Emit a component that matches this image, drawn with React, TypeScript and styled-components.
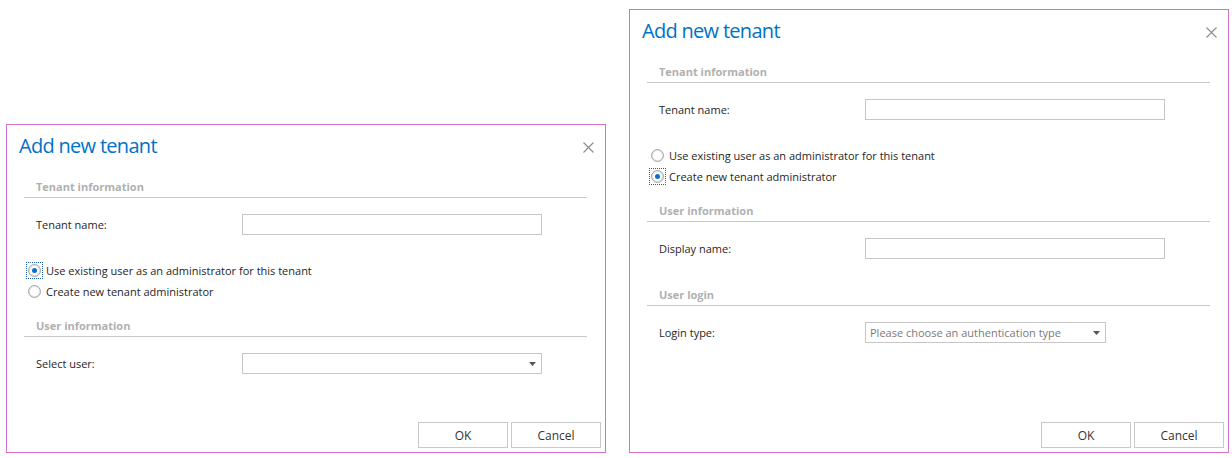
import React from "react";
import styled, { createGlobalStyle } from "styled-components";

const GlobalStyle = createGlobalStyle`
  html, body { margin: 0; padding: 0; background: #fff; }
  body { font-family: "Open Sans", "Noto Sans", sans-serif; color: #262626; }
`;

const Page = styled.div`
  display: flex;
  align-items: flex-end;
  gap: 23px;
  padding: 9px 0 0 6px;
`;

const Dialog = styled.div<{ $height: number }>`
  box-sizing: border-box;
  width: 600px;
  height: ${(p) => p.$height}px;
  border: 1px solid #d46fcd;
  background: #fff;
  display: flex;
  flex-direction: column;
`;

const TitleBar = styled.div`
  display: flex;
  justify-content: space-between;
  align-items: flex-start;
  padding: 6px 11px 0 12px;
`;

const Title = styled.h1`
  margin: 0;
  font-size: 20px;
  line-height: 30px;
  font-weight: 400;
  color: #0072c6;
  letter-spacing: -0.7px;
`;

const CloseButton = styled.button`
  border: 0;
  background: none;
  padding: 0;
  margin-top: 11px;
  width: 11px;
  height: 11px;
  display: flex;
  cursor: pointer;
`;

const Section = styled.section<{ $top: number }>`
  margin-top: ${(p) => p.$top}px;
`;

const SectionHeader = styled.h2`
  margin: 0 18px 0 17px;
  padding-left: 12px;
  height: 20px;
  line-height: 20px;
  border-bottom: 1px solid #c8c8c8;
  font-size: 11px;
  font-weight: 700;
  color: #b0b0b0;
`;

const FormRow = styled.div`
  margin-top: 16px;
  display: flex;
  align-items: center;
  height: 21px;
  padding-left: 29px;
`;

const Label = styled.label`
  width: 206px;
  font-size: 11px;
  color: #262626;
`;

const TextBox = styled.div`
  box-sizing: border-box;
  width: 300px;
  height: 21px;
  border: 1px solid #c6c6c6;
  background: #fff;
`;

const SelectBox = styled.div<{ $width: number }>`
  box-sizing: border-box;
  width: ${(p) => p.$width}px;
  height: 21px;
  border: 1px solid #c6c6c6;
  background: #fff;
  display: flex;
  align-items: center;
  justify-content: space-between;
  padding: 0 5px 0 4px;
`;

const Placeholder = styled.span`
  font-size: 11px;
  color: #7a7a7a;
`;

const RadioGroup = styled.div`
  margin-top: 25px;
  display: flex;
  flex-direction: column;
`;

const RadioRow = styled.div`
  display: flex;
  align-items: center;
  height: 21px;
  padding-left: 19px;
  gap: 3px;
`;

const FocusBox = styled.span<{ $focused: boolean }>`
  box-sizing: border-box;
  width: 17px;
  height: 17px;
  display: flex;
  align-items: center;
  justify-content: center;
  border: 1px dotted ${(p) => (p.$focused ? "#1f5fb0" : "transparent")};
`;

const RadioCircle = styled.span<{ $checked: boolean }>`
  box-sizing: border-box;
  width: 13px;
  height: 13px;
  border-radius: 50%;
  border: 1px solid #a4a4a4;
  box-shadow: inset 0 0 0 1px #e2e2e2;
  background: #fff;
  display: flex;
  align-items: center;
  justify-content: center;
  &::after {
    content: "";
    width: 5px;
    height: 5px;
    border-radius: 50%;
    background: ${(p) => (p.$checked ? "#0a6fcf" : "transparent")};
  }
`;

const RadioText = styled.span`
  font-size: 11px;
  color: #262626;
`;

const Footer = styled.div`
  margin-top: auto;
  display: flex;
  justify-content: flex-end;
  gap: 3px;
  padding: 0 4px 4px 0;
`;

const Button = styled.button`
  box-sizing: border-box;
  width: 90px;
  height: 26px;
  border: 1px solid #c9c9c9;
  background: #fff;
  font-family: "Open Sans", "Noto Sans", sans-serif;
  font-size: 12px;
  color: #333;
  padding: 0;
`;

const CloseIcon = () => (
  <svg width="11" height="11" viewBox="0 0 11 11">
    <path d="M0.5 0.5 L10.5 10.5 M10.5 0.5 L0.5 10.5" stroke="#8c8c8c" strokeWidth="1.1" fill="none" />
  </svg>
);

const Arrow = () => (
  <svg width="7" height="4" viewBox="0 0 7 4">
    <path d="M0 0 H7 L3.5 4 Z" fill="#555" />
  </svg>
);

type Radio = { text: string; checked: boolean };

const Radios = ({ items }: { items: Radio[] }) => (
  <RadioGroup>
    {items.map((r) => (
      <RadioRow key={r.text}>
        <FocusBox $focused={r.checked}>
          <RadioCircle $checked={r.checked} />
        </FocusBox>
        <RadioText>{r.text}</RadioText>
      </RadioRow>
    ))}
  </RadioGroup>
);

const Head = () => (
  <TitleBar>
    <Title>Add new tenant</Title>
    <CloseButton aria-label="Close">
      <CloseIcon />
    </CloseButton>
  </TitleBar>
);

const Buttons = () => (
  <Footer>
    <Button>OK</Button>
    <Button>Cancel</Button>
  </Footer>
);

const TenantInfo = () => (
  <Section $top={16}>
    <SectionHeader>Tenant information</SectionHeader>
    <FormRow>
      <Label>Tenant name:</Label>
      <TextBox />
    </FormRow>
  </Section>
);

const radioTexts = [
  "Use existing user as an administrator for this tenant",
  "Create new tenant administrator",
];

export default function App() {
  return (
    <>
      <GlobalStyle />
      <Page>
        <Dialog $height={329}>
          <Head />
          <TenantInfo />
          <Radios items={[{ text: radioTexts[0], checked: true }, { text: radioTexts[1], checked: false }]} />
          <Section $top={14}>
            <SectionHeader>User information</SectionHeader>
            <FormRow>
              <Label>Select user:</Label>
              <SelectBox $width={300}>
                <span />
                <Arrow />
              </SelectBox>
            </FormRow>
          </Section>
          <Buttons />
        </Dialog>
        <Dialog $height={444}>
          <Head />
          <TenantInfo />
          <Radios items={[{ text: radioTexts[0], checked: false }, { text: radioTexts[1], checked: true }]} />
          <Section $top={14}>
            <SectionHeader>User information</SectionHeader>
            <FormRow>
              <Label>Display name:</Label>
              <TextBox />
            </FormRow>
          </Section>
          <Section $top={26}>
            <SectionHeader>User login</SectionHeader>
            <FormRow>
              <Label>Login type:</Label>
              <SelectBox $width={241}>
                <Placeholder>Please choose an authentication type</Placeholder>
                <Arrow />
              </SelectBox>
            </FormRow>
          </Section>
          <Buttons />
        </Dialog>
      </Page>
    </>
  );
}
